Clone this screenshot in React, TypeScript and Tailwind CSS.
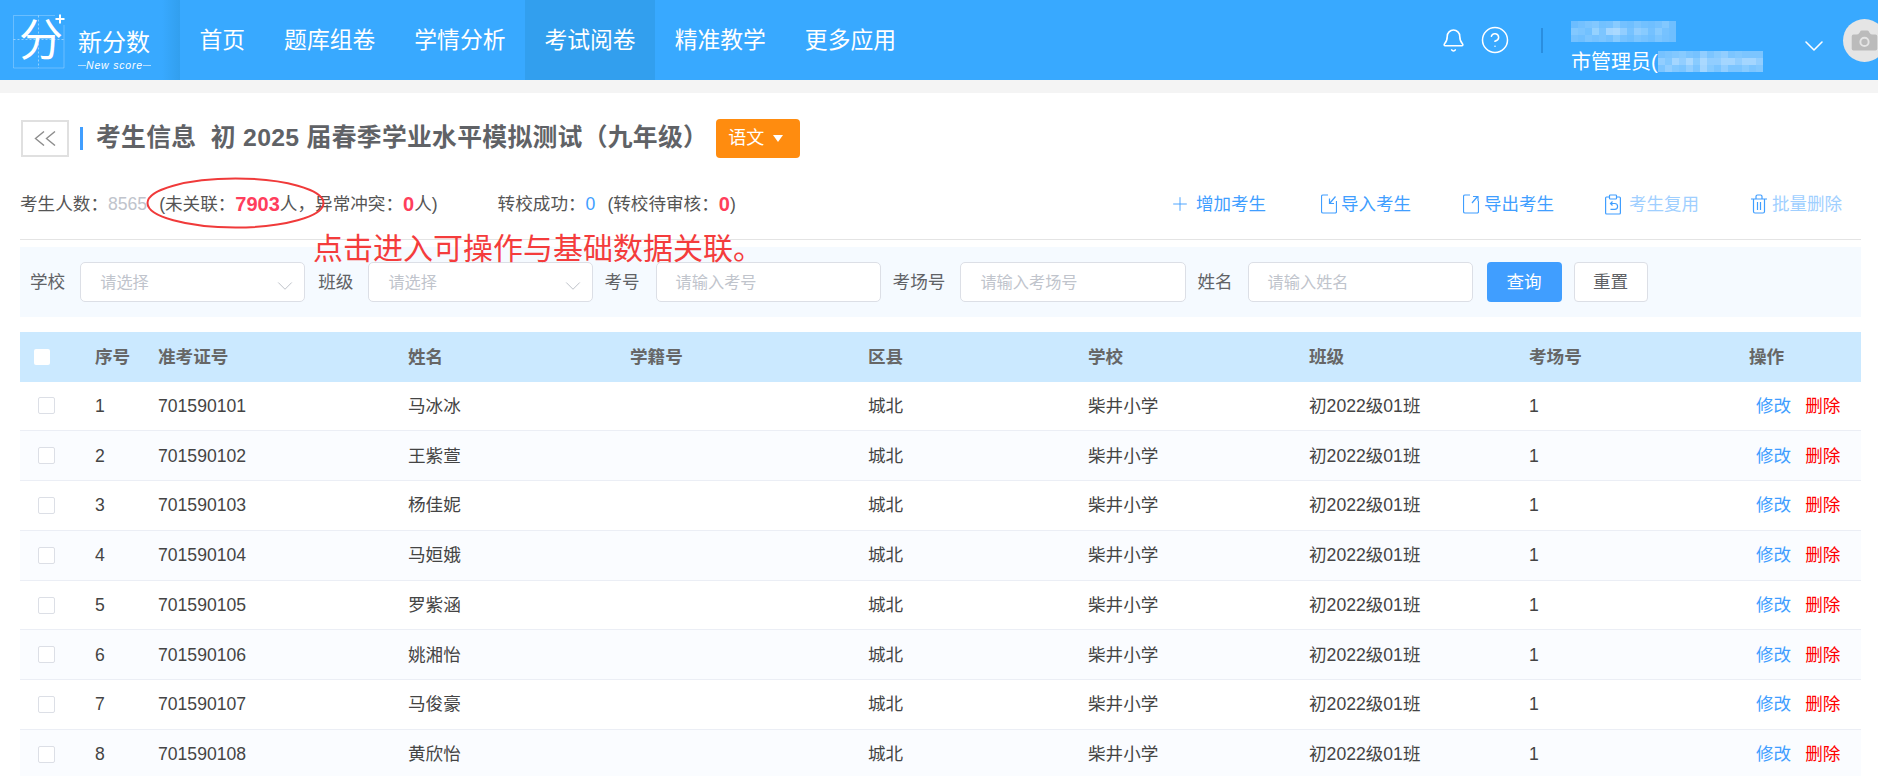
import { Bell, ChevronDown, CircleHelp, Plus, Camera } from 'lucide-react';

const font = { fontFamily: '"Liberation Sans", "Noto Sans CJK SC", sans-serif' };

const NAV = ['首页', '题库组卷', '学情分析', '考试阅卷', '精准教学', '更多应用'];
const COLS = 'grid grid-cols-[75px_63px_250px_222px_238px_220px_221px_220px_220px_1fr] items-center';

const STUDENTS = [
  ['1', '701590101', '马冰冰'],
  ['2', '701590102', '王紫萱'],
  ['3', '701590103', '杨佳妮'],
  ['4', '701590104', '马姮娥'],
  ['5', '701590105', '罗紫涵'],
  ['6', '701590106', '姚湘怡'],
  ['7', '701590107', '马俊豪'],
  ['8', '701590108', '黄欣怡'],
];

// blurred bits of the user name, drawn as colour cells
const MOSAIC_TOP = [
  ['bg-[#6cbdff]', 'bg-[#74c1ff]', 'bg-[#7cc5ff]', 'bg-[#82c8ff]', 'bg-[#72c1ff]', 'bg-[#76c2ff]', 'bg-[#88cbff]', 'bg-[#74c1ff]', 'bg-[#6fbfff]', 'bg-[#7cc5ff]', 'bg-[#72c1ff]', 'bg-[#6fbfff]', 'bg-[#76c2ff]', 'bg-[#82c8ff]', 'bg-[#6fbfff]'],
  ['bg-[#82c8ff]', 'bg-[#7cc5ff]', 'bg-[#72c1ff]', 'bg-[#95d2ff]', 'bg-[#7cc5ff]', 'bg-[#a4d6ff]', 'bg-[#aad9ff]', 'bg-[#92ceff]', 'bg-[#76c2ff]', 'bg-[#92ceff]', 'bg-[#88cbff]', 'bg-[#74c1ff]', 'bg-[#88cbff]', 'bg-[#76c2ff]', 'bg-[#6fbfff]'],
  ['bg-[#74c1ff]', 'bg-[#6fbfff]', 'bg-[#7cc5ff]', 'bg-[#76c2ff]', 'bg-[#7cc5ff]', 'bg-[#74c1ff]', 'bg-[#88cbff]', 'bg-[#76c2ff]', 'bg-[#6fbfff]', 'bg-[#7cc5ff]', 'bg-[#76c2ff]', 'bg-[#6fbfff]', 'bg-[#7cc5ff]', 'bg-[#74c1ff]', 'bg-[#6fbfff]'],
];
const MOSAIC_BOTTOM = [
  ['bg-[#76c2ff]', 'bg-[#7cc5ff]', 'bg-[#82c8ff]', 'bg-[#88cbff]', 'bg-[#7cc5ff]', 'bg-[#76c2ff]', 'bg-[#92ceff]', 'bg-[#7cc5ff]', 'bg-[#88cbff]', 'bg-[#92ceff]', 'bg-[#7cc5ff]', 'bg-[#82c8ff]', 'bg-[#7cc5ff]', 'bg-[#7cc5ff]', 'bg-[#7cc5ff]'],
  ['bg-[#92ceff]', 'bg-[#82c8ff]', 'bg-[#a4d6ff]', 'bg-[#92ceff]', 'bg-[#aad9ff]', 'bg-[#88cbff]', 'bg-[#aad9ff]', 'bg-[#92ceff]', 'bg-[#92ceff]', 'bg-[#a4d6ff]', 'bg-[#a4d6ff]', 'bg-[#92ceff]', 'bg-[#a4d6ff]', 'bg-[#a4d6ff]', 'bg-[#92ceff]'],
  ['bg-[#7cc5ff]', 'bg-[#92ceff]', 'bg-[#82c8ff]', 'bg-[#7cc5ff]', 'bg-[#92ceff]', 'bg-[#7cc5ff]', 'bg-[#a4d6ff]', 'bg-[#88cbff]', 'bg-[#7cc5ff]', 'bg-[#92ceff]', 'bg-[#7cc5ff]', 'bg-[#7cc5ff]', 'bg-[#88cbff]', 'bg-[#7cc5ff]', 'bg-[#82c8ff]'],
];

function Mosaic({ rows }: { rows: string[][] }) {
  return (
    <div className="flex flex-col blur-[0.5px]">
      {rows.map((row, i) => (
        <div key={i} className="flex">
          {row.map((c, j) => (
            <span key={j} className={`w-[7px] h-[7px] ${c}`} />
          ))}
        </div>
      ))}
    </div>
  );
}

function Logo() {
  return (
    <div className="relative w-[180px] h-full shrink-0 bg-gradient-to-r from-[#38a9ff] from-90% to-[#329fee]">
      <svg className="absolute left-[13px] top-[13px]" width="54" height="56" viewBox="0 0 54 56" fill="none">
        <path d="M.5 2.500H42M.5 2.500V55H51V12" stroke="#fff" strokeOpacity=".25" />
        <path d="M25.500 2.500V55M.5 26.500H51" stroke="#fff" strokeOpacity=".45" strokeDasharray="2 2" />
        <path d="M47 1.500V10.500M42.500 6H51.500" stroke="#fff" strokeWidth="2" />
      </svg>
      <span className="absolute left-[19px] top-[19px] text-[44px] leading-[44px] text-white">分</span>
      <span className="absolute left-[78px] top-[27px] text-[24px] leading-[32px] text-white">新分数</span>
      <div className="absolute left-[78px] top-[59px] flex items-center justify-between w-[73px]">
        <span className="h-px w-[9px] bg-white/60" />
        <span className="text-[10.5px] leading-[12px] italic tracking-[0.8px] text-white whitespace-nowrap">New score</span>
        <span className="h-px w-[9px] bg-white/60" />
      </div>
    </div>
  );
}

function Header() {
  return (
    <header className="flex items-center h-[80px] bg-[#38a9ff] text-white">
      <Logo />
      <nav className="flex h-full">
        {NAV.map((item) => (
          <a
            key={item}
            className={`flex items-center px-[19.5px] text-[22.8px] ${item === '考试阅卷' ? 'bg-[#329fee]' : ''}`}
          >
            {item}
          </a>
        ))}
      </nav>
      <div className="flex items-center ml-auto h-full -mr-[8px]">
        <Bell size={25} strokeWidth={1.5} />
        <CircleHelp size={30} strokeWidth={1.2} className="ml-[14px]" />
        <span className="w-[2px] h-[25px] bg-[#2a8edf] ml-[31px]" />
        <div className="flex items-center ml-[28px]">
          <div className="flex flex-col w-[227px] pt-[13px]">
            <Mosaic rows={MOSAIC_TOP} />
            <div className="flex items-center h-[21px] mt-[9px] text-[20px] whitespace-nowrap">
              <span>市管理员(</span>
              <Mosaic rows={MOSAIC_BOTTOM} />
            </div>
          </div>
          <ChevronDown size={32} strokeWidth={1.2} className="mt-[11px]" />
        </div>
        <div className="flex items-center justify-center w-[43px] h-[43px] rounded-full bg-[#e5e5e5] ml-[13px]">
          <Camera size={33} fill="#bbb" stroke="#e5e5e5" strokeWidth={1.4} className="shrink-0" />
        </div>
      </div>
    </header>
  );
}

function ImportIcon({ out }: { out?: boolean }) {
  return (
    <svg width="16" height="20" viewBox="0 0 16 20" fill="none" stroke="#409eff" strokeWidth="1.2">
      <path d="M7 1H2a1.500 1.500 0 0 0-1.500 1.500v15A1.500 1.500 0 0 0 2 19h12a1.500 1.500 0 0 0 1.500-1.500V7" />
      {out ? <path d="M9 9l5.500-6.500M10 2.500h5v4.500" /> : <path d="M14.500 2.500L9 9M8.500 4.500V9.500H13" />}
    </svg>
  );
}

function ReuseIcon() {
  return (
    <svg width="16" height="21" viewBox="0 0 16 21" fill="none" stroke="#409eff" strokeWidth="1.2">
      <path d="M4.500 3H1.500A1 1 0 0 0 .6 4v15a1 1 0 0 0 1 1h12.800a1 1 0 0 0 1-1V4a1 1 0 0 0-1-1h-3" />
      <rect x="4.500" y="1" width="7" height="4" rx=".8" />
      <path d="M5.500 9.500h4.200a2.800 2.800 0 0 1 0 5.800H5.500M7.500 7.500l-2 2 2 2" />
    </svg>
  );
}

function TrashIcon() {
  return (
    <svg width="16" height="20" viewBox="0 0 16 20" fill="none" stroke="#409eff" strokeWidth="1.2">
      <path d="M0 5h16M5 5V2.500A1.500 1.500 0 0 1 6.500 1h3A1.500 1.500 0 0 1 11 2.500V5" />
      <path d="M2.500 5v12.500A1.500 1.500 0 0 0 4 19h8a1.500 1.500 0 0 0 1.500-1.500V5M6.500 8v8M9.500 8v8" />
    </svg>
  );
}

function BackIcon() {
  return (
    <svg width="22" height="15" viewBox="0 0 22 15" fill="none" stroke="#8d8d8d" strokeWidth="1.4">
      <path d="M10 .5L1.500 7.500 10 14.500M21 .5L12.500 7.500 21 14.500" />
    </svg>
  );
}

function Toolbar() {
  return (
    <div className="flex items-center ml-auto pr-[19px] text-[17.5px] text-[#409eff]">
      <span className="flex items-center w-[152px]">
        <Plus size={22} strokeWidth={1} className="mr-[5px]" />
        增加考生
      </span>
      <span className="flex items-center w-[142px] gap-[4px]">
        <ImportIcon />
        导入考生
      </span>
      <span className="flex items-center w-[142px] gap-[5px]">
        <ImportIcon out />
        导出考生
      </span>
      <span className="flex items-center w-[146px] gap-[8px] text-[#a0cfff]">
        <ReuseIcon />
        考生复用
      </span>
      <span className="flex items-center w-[91px] gap-[5px] text-[#a0cfff]">
        <TrashIcon />
        批量删除
      </span>
    </div>
  );
}

function Field({ label, placeholder, select, inputClass }: { label: string; placeholder: string; select?: boolean; inputClass: string }) {
  return (
    <>
      <span className="text-[17.6px] text-[#606266] whitespace-nowrap">{label}</span>
      <div className={`flex items-center justify-between h-[40px] bg-white border border-[#dcdfe6] rounded-[5px] pl-[19px] pr-[6px] ${inputClass}`}>
        <span className="text-[16.2px] text-[#c0c4cc]">{placeholder}</span>
        {select && <ChevronDown size={26} strokeWidth={0.8} className="text-[#b4b8c0] mt-[8px]" />}
      </div>
    </>
  );
}

function FilterBar() {
  return (
    <div className="flex items-center h-[70px] mt-[7px] pl-[10px] bg-[#f5faff]">
      <Field label="学校" placeholder="请选择" select inputClass="w-[225px] ml-[15px]" />
      <span className="w-[13px]" />
      <Field label="班级" placeholder="请选择" select inputClass="w-[225px] ml-[15px]" />
      <span className="w-[11px]" />
      <Field label="考号" placeholder="请输入考号" inputClass="w-[225px] ml-[16px]" />
      <span className="w-[12px]" />
      <Field label="考场号" placeholder="请输入考场号" inputClass="w-[226px] ml-[15px]" />
      <span className="w-[11px]" />
      <Field label="姓名" placeholder="请输入姓名" inputClass="w-[225px] ml-[15px]" />
      <button className="w-[75px] h-[40px] ml-[14px] rounded-[4px] bg-[#409eff] text-white text-[17.6px]">查询</button>
      <button className="w-[74px] h-[40px] ml-[12px] rounded-[4px] bg-white border border-[#dcdfe6] text-[#606266] text-[17.6px]">重置</button>
    </div>
  );
}

function StudentTable() {
  return (
    <div className="mt-[15px] text-[17.6px]">
      <div className={`${COLS} h-[49.5px] bg-[#cbe9ff] font-bold text-[#666]`}>
        <span className="ml-[14px] w-[16px] h-[16px] rounded-[2px] bg-white" />
        <span>序号</span>
        <span>准考证号</span>
        <span>姓名</span>
        <span>学籍号</span>
        <span>区县</span>
        <span>学校</span>
        <span>班级</span>
        <span>考场号</span>
        <span>操作</span>
      </div>
      {STUDENTS.map(([no, ticket, name], i) => (
        <div
          key={no}
          className={`${COLS} h-[49.8px] border-b border-[#ebeef5] text-[#444] ${i % 2 ? 'bg-[#fafcff]' : 'bg-white'}`}
        >
          <span className="ml-[18px] w-[17px] h-[17px] rounded-[2px] bg-white border border-[#dcdfe6]" />
          <span>{no}</span>
          <span>{ticket}</span>
          <span>{name}</span>
          <span />
          <span>城北</span>
          <span>柴井小学</span>
          <span>初2022级01班</span>
          <span>1</span>
          <span className="whitespace-nowrap ml-[7px]">
            <a className="text-[#409eff]">修改</a>
            <a className="text-[#f00] ml-[14px]">删除</a>
          </span>
        </div>
      ))}
    </div>
  );
}

export default function App() {
  return (
    <div style={font} className="w-[1878px] h-[776px] overflow-hidden bg-white">
      <Header />
      <div className="h-[13px] bg-[#f4f4f4]" />
      <main className="pl-[20px] pr-[17px]">
        <div className="flex items-center h-[40px] mt-[25px]">
          <button className="flex items-center justify-center w-[48px] h-[37px] ml-px border-2 border-[#e0e0e0]">
            <BackIcon />
          </button>
          <span className="w-[3px] h-[23px] bg-[#409eff] ml-[11px]" />
          <h1 className="ml-[13px] text-[24.8px] tracking-[0.3px] font-bold text-[#606266] whitespace-nowrap">考生信息&nbsp; 初 2025 届春季学业水平模拟测试（九年级）</h1>
          <button className="flex items-center gap-[9px] h-[39px] w-[84px] ml-[8px] pl-[12px] rounded-[4px] bg-[#ff8c0f] text-white text-[18px]">
            语文
            <span className="w-0 h-0 border-x-[5.5px] border-x-transparent border-t-[7px] border-t-white" />
          </button>
        </div>
        <div className="relative flex items-center h-[40px] mt-[26px] text-[17.6px] text-[#555] whitespace-nowrap">
          <span>考生人数：</span>
          <span className="text-[#c0c4cc]">8565</span>
          <span className="ml-[12px]">(未关联：</span>
          <b className="text-[20px] text-[#ff3e5c]">7903</b>
          <span>人，异常冲突：</span>
          <b className="text-[20px] text-[#ff3e5c]">0</b>
          <span>人)</span>
          <span className="ml-[60px]">转校成功：</span>
          <span className="text-[#409eff]">0</span>
          <span className="ml-[12px]">(转校待审核：</span>
          <b className="text-[20px] text-[#ff3e5c]">0</b>
          <span>)</span>
          <Toolbar />
          <svg className="absolute left-[126px] top-[-7px]" width="179" height="52" viewBox="0 0 179 52" fill="none">
            <ellipse cx="89.500" cy="26" rx="88" ry="24.500" stroke="#f03a3a" strokeWidth="2" />
          </svg>
          <span className="absolute left-[293px] top-[47px] text-[30px] leading-[36px] text-[#f43c3c] z-10">点击进入可操作与基础数据关联。</span>
        </div>
        <div className="h-px mt-[15px] bg-[#e4e4e4]" />
        <FilterBar />
        <StudentTable />
      </main>
    </div>
  );
}
